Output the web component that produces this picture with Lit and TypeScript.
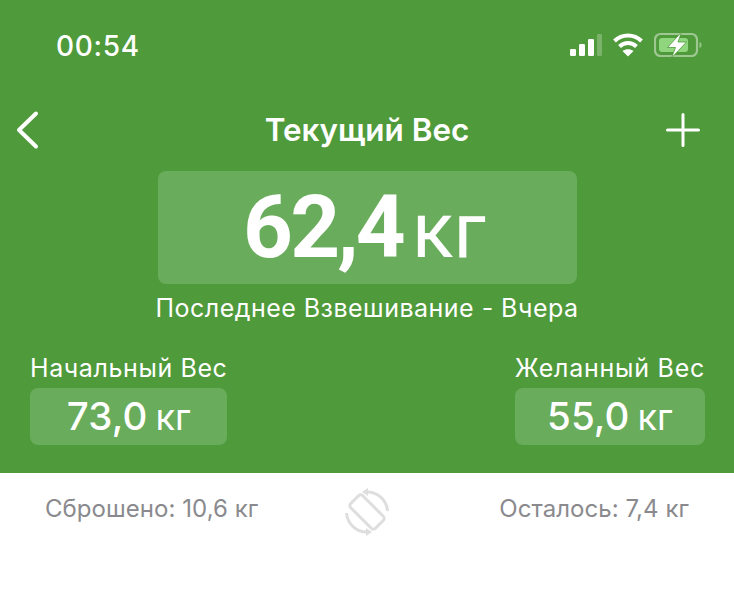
import { LitElement, html, css } from "lit";
import { customElement } from "lit/decorators.js";

@customElement("app-root")
export class AppRoot extends LitElement {
  static styles = css`
    :host { display: block; width: 734px; height: 600px; background: #fff; font-family: Inter, "Noto Sans", sans-serif; overflow: hidden; }
    .green { background: #4f9a3a; height: 473px; box-sizing: border-box; color: #fff; display: flex; flex-direction: column; }
    .status { height: 92px; box-sizing: border-box; padding: 30px 32px 0 56px; display: flex; justify-content: space-between; align-items: flex-start; }
    .time { font-size: 28px; line-height: 33px; font-weight: 500; letter-spacing: 0.7px; }
    .sys { display: flex; align-items: center; gap: 11px; height: 30px; }
    .nav { height: 76px; display: grid; grid-template-columns: 1fr auto 1fr; align-items: center; margin-bottom: 3px; }
    .nav svg { display: block; }
    .back { margin-left: 15px; }
    .add { justify-self: end; margin-right: 34px; }
    .title { font-size: 31.4px; font-weight: 600; line-height: 36px; }
    .current { align-self: center; width: 419px; height: 113px; box-sizing: border-box; padding-right: 5px; background: #69ac5b; border-radius: 8px; display: flex; align-items: baseline; justify-content: center; gap: 9px; line-height: 113px; font-family: Roboto, sans-serif; }
    .current b { font-size: 87px; font-weight: 700; letter-spacing: -2.8px; }
    .current span { font-size: 77px; font-weight: 400; }
    .last { text-align: center; font-size: 25px; line-height: 30px; margin-top: 9px; letter-spacing: 0.48px; }
    .goals { display: flex; justify-content: space-between; padding: 0 29px 0 30px; margin-top: 30px; }
    .goal { display: flex; flex-direction: column; gap: 5px; }
    .label { font-size: 25px; line-height: 30px; white-space: nowrap; letter-spacing: 0.6px; }
    .label.wide { letter-spacing: 0.75px; }
    .pill { height: 57px; background: #69ac5b; border-radius: 8px; display: flex; align-items: baseline; justify-content: center; gap: 8px; line-height: 57px; }
    .pill b { font-size: 38.5px; font-weight: 550; letter-spacing: 0.1px; }
    .pill span { font-size: 36px; font-weight: 400; }
    .bottom { display: grid; grid-template-columns: 1fr auto 1fr; align-items: center; padding: 7px 45px 0; color: #8a8a8e; font-size: 24px; height: 50px; letter-spacing: 0.05px; }
    .bottom div:last-child { justify-self: end; }
    .bottom svg { display: block; margin-top: 8px; }
  `;

  render() {
    return html`
      <div class="green">
        <div class="status">
          <div class="time">00:54</div>
          <div class="sys">
            <svg width="32" height="24" viewBox="0 0 32 24">
              <rect x="0" y="16" width="6" height="7" rx="1.2" fill="#fff"/>
              <rect x="9" y="11" width="6" height="12" rx="1.2" fill="#fff"/>
              <rect x="18" y="6" width="6" height="17" rx="1.2" fill="#fff"/>
              <rect x="27" y="1" width="5" height="22" rx="1.2" fill="#fff" opacity=".25"/>
            </svg>
            <svg width="30" height="24" viewBox="0 0 30 24" fill="none" stroke="#fff" stroke-width="4">
              <path d="M1.500 8C9 .5 21 .5 28.500 8"/>
              <path d="M6.500 13.500c5-4.800 12-4.800 17 0"/>
              <path d="M15 23.500l-5.500-5.500c3-2.500 8-2.500 11 0z" fill="#fff" stroke="none"/>
            </svg>
            <svg width="48" height="26" viewBox="0 0 48 26">
              <rect x="1" y="2" width="42" height="22" rx="5.500" fill="none" stroke="#fff" stroke-opacity=".45" stroke-width="2.200"/>
              <rect x="5" y="6" width="29" height="14" rx="3" fill="#8fd67e"/>
              <path d="M45.500 10c1.500.6 2 1.800 2 3s-.5 2.400-2 3z" fill="#fff" fill-opacity=".45"/>
              <path d="M27.500 0L13.500 15.500h8L17.500 26L32.500 10H24z" fill="#fff" stroke="#4f9a3a" stroke-width=".8"/>
            </svg>
          </div>
        </div>
        <div class="nav">
          <svg class="back" width="26" height="40" viewBox="0 0 26 40" fill="none" stroke="#fff" stroke-width="4" stroke-linecap="round" stroke-linejoin="round"><path d="M21 3.500L4 20l17 16.500"/></svg>
          <div class="title">Текущий Вес</div>
          <svg class="add" width="34" height="34" viewBox="0 0 34 34" fill="none" stroke="#fff" stroke-width="3" stroke-linecap="round"><path d="M17 1.500v31M1.500 17h31"/></svg>
        </div>
        <div class="current"><b>62,4</b><span>кг</span></div>
        <div class="last">Последнее Взвешивание - Вчера</div>
        <div class="goals">
          <div class="goal">
            <div class="label">Начальный Вес</div>
            <div class="pill"><b>73,0</b><span>кг</span></div>
          </div>
          <div class="goal">
            <div class="label wide">Желанный Вес</div>
            <div class="pill"><b>55,0</b><span>кг</span></div>
          </div>
        </div>
      </div>
      <div class="bottom">
        <div>Сброшено: 10,6 кг</div>
        <svg width="46" height="48" viewBox="0 0 46 48" fill="none" stroke="#dedede" stroke-width="3">
          <rect x="-8.500" y="-17.500" width="17" height="35" rx="3" transform="translate(23 24) rotate(-45)"/>
          <path d="M23 4A20.500 20.500 0 0 1 43.500 23M23 44A20.500 20.500 0 0 1 2.500 25"/>
          <path d="M24 0L18 4l6 4zM22 48l6-4-6-4z" fill="#dedede" stroke="none"/>
        </svg>
        <div>Осталось: 7,4 кг</div>
      </div>
    `;
  }
}
